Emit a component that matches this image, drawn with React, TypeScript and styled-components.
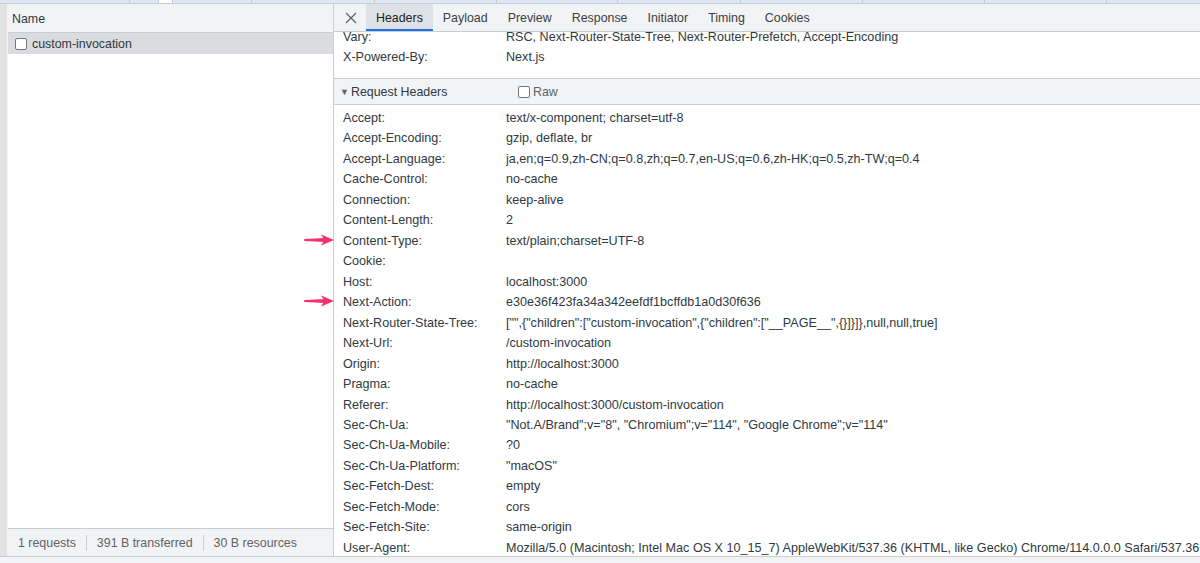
import React from "react";
import styled, { createGlobalStyle } from "styled-components";

const Global = createGlobalStyle`
  html, body { margin: 0; padding: 0; background: #ffffff; }
  body { font-family: "Liberation Sans", Arial, Helvetica, sans-serif; font-size: 12.4px; color: #303942; }
  * { box-sizing: border-box; }
`;

const Page = styled.div`
  position: relative;
  width: 1200px;
  height: 563px;
  overflow: hidden;
  display: grid;
  grid-template-rows: 4px 552px 7px;
`;

const TopStrip = styled.div`
  background: #dfe8f6;
  border-bottom: 1px solid #c8cbd0;
  display: flex;
`;

const TopCell = styled.div<{ $w: number; $white?: boolean }>`
  width: ${(p) => p.$w}px;
  flex: none;
  height: 100%;
  background: ${(p) => (p.$white ? "#ffffff" : "transparent")};
  border-right: 1px solid #c6ccd6;
`;

const Main = styled.div`
  display: flex;
  min-height: 0;
`;

const Gutter = styled.div`
  width: 8px;
  flex: none;
  background: #e2e2e2;
  border-right: 1px solid #f4f4f4;
`;

const LeftPanel = styled.div`
  width: 326px;
  flex: none;
  display: flex;
  flex-direction: column;
  border-right: 1px solid #cbcdd1;
  background: #ffffff;
`;

const NameHeader = styled.div`
  height: 29px;
  flex: none;
  background: #f1f3f4;
  border-bottom: 1px solid #cbcdd1;
  display: flex;
  align-items: center;
  padding-left: 4px;
  padding-top: 1px;
  color: #303942;
`;

const RequestRow = styled.div`
  height: 21px;
  flex: none;
  background: #dadce0;
  display: flex;
  align-items: center;
  padding-left: 7px;
  gap: 5px;
  color: #303942;
`;

const Box = styled.span`
  width: 12px;
  height: 12px;
  flex: none;
  border: 1px solid #767676;
  border-radius: 2px;
  background: #ffffff;
  display: inline-block;
`;

const Spacer = styled.div`
  flex: 1;
`;

const Footer = styled.div`
  height: 28px;
  flex: none;
  background: #f1f3f4;
  border-top: 1px solid #cbcdd1;
  display: flex;
  align-items: center;
  color: #5f6368;
`;

const FooterItem = styled.span<{ $last?: boolean }>`
  padding: 0 10px;
  line-height: 16px;
  border-right: ${(p) => (p.$last ? "none" : "1px solid #cbcdd1")};
  white-space: nowrap;
`;

const RightPanel = styled.div`
  flex: 1;
  min-width: 0;
  display: flex;
  flex-direction: column;
  background: #ffffff;
`;

const TabBar = styled.div`
  height: 28px;
  flex: none;
  background: #f1f3f4;
  border-bottom: 1px solid #cbcdd1;
  display: flex;
  align-items: stretch;
  padding-left: 32px;
  position: relative;
`;

const CloseBtn = styled.div`
  position: absolute;
  left: 10px;
  top: 7px;
  width: 14px;
  height: 14px;
  display: flex;
  align-items: center;
  justify-content: center;
`;

const Tab = styled.div<{ $active?: boolean }>`
  padding: 0 10px;
  display: flex;
  align-items: center;
  color: ${(p) => (p.$active ? "#202124" : "#3c4043")};
  background: ${(p) => (p.$active ? "#dee1e6" : "transparent")};
  border-bottom: 2px solid ${(p) => (p.$active ? "#1a73e8" : "transparent")};
  padding-top: 2px;
  white-space: nowrap;
`;

const Content = styled.div`
  flex: 1;
  min-height: 0;
  overflow: hidden;
  font-size: 12.6px;
`;

const Scrolled = styled.div`
  margin-top: -5px;
`;

const Section = styled.div<{ $padTop?: number; $padBottom?: number }>`
  padding-top: ${(p) => p.$padTop ?? 0}px;
  padding-bottom: ${(p) => p.$padBottom ?? 0}px;
`;

const Row = styled.div`
  display: grid;
  grid-template-columns: 163px 1fr;
  height: 20.48px;
  line-height: 20.48px;
  padding-left: 9px;
  white-space: nowrap;
`;

const HName = styled.span`
  color: #303942;
  overflow: hidden;
`;

const HValue = styled.span`
  color: #303942;
  overflow: hidden;
`;

const SectionHeader = styled.div`
  height: 27px;
  background: #f1f3f4;
  border-top: 1px solid #cbcdd1;
  border-bottom: 1px solid #cbcdd1;
  display: grid;
  grid-template-columns: 178px 1fr;
  align-items: center;
  padding-left: 6px;
  padding-top: 1px;
  color: #303942;
  font-size: 12.4px;
`;

const SectionTitle = styled.span`
  display: flex;
  align-items: center;
  gap: 2px;
`;

const Triangle = styled.span`
  font-size: 9px;
  color: #5f6368;
  width: 9px;
`;

const RawLabel = styled.label`
  display: flex;
  align-items: center;
  gap: 3px;
  color: #5f6368;
`;

const BottomStrip = styled.div`
  background: #f1f3f4;
  border-top: 1px solid #cbcdd1;
`;

const Arrow = styled.svg<{ $top: number }>`
  position: absolute;
  left: 304px;
  top: ${(p) => p.$top}px;
  width: 31px;
  height: 12px;
  overflow: visible;
`;

const responseRows: [string, string][] = [
  ["Vary:", "RSC, Next-Router-State-Tree, Next-Router-Prefetch, Accept-Encoding"],
  ["X-Powered-By:", "Next.js"],
];

const requestRows: [string, string][] = [
  ["Accept:", "text/x-component; charset=utf-8"],
  ["Accept-Encoding:", "gzip, deflate, br"],
  ["Accept-Language:", "ja,en;q=0.9,zh-CN;q=0.8,zh;q=0.7,en-US;q=0.6,zh-HK;q=0.5,zh-TW;q=0.4"],
  ["Cache-Control:", "no-cache"],
  ["Connection:", "keep-alive"],
  ["Content-Length:", "2"],
  ["Content-Type:", "text/plain;charset=UTF-8"],
  ["Cookie:", ""],
  ["Host:", "localhost:3000"],
  ["Next-Action:", "e30e36f423fa34a342eefdf1bcffdb1a0d30f636"],
  ["Next-Router-State-Tree:", '["",{"children":["custom-invocation",{"children":["__PAGE__",{}]}]},null,null,true]'],
  ["Next-Url:", "/custom-invocation"],
  ["Origin:", "http://localhost:3000"],
  ["Pragma:", "no-cache"],
  ["Referer:", "http://localhost:3000/custom-invocation"],
  ["Sec-Ch-Ua:", '"Not.A/Brand";v="8", "Chromium";v="114", "Google Chrome";v="114"'],
  ["Sec-Ch-Ua-Mobile:", "?0"],
  ["Sec-Ch-Ua-Platform:", '"macOS"'],
  ["Sec-Fetch-Dest:", "empty"],
  ["Sec-Fetch-Mode:", "cors"],
  ["Sec-Fetch-Site:", "same-origin"],
  ["User-Agent:", "Mozilla/5.0 (Macintosh; Intel Mac OS X 10_15_7) AppleWebKit/537.36 (KHTML, like Gecko) Chrome/114.0.0.0 Safari/537.36"],
];

const tabs = ["Headers", "Payload", "Preview", "Response", "Initiator", "Timing", "Cookies"];
const topCells = [130, 29, 14, 79, 123, 122, 121, 123, 122, 122, 122, 100];

const PinkArrow = ({ top }: { top: number }) => (
  <Arrow $top={top} viewBox="0 0 31 12">
    <path d="M1 6 L21 5 L21 7 Z" fill="#f2306e" stroke="#f2306e" strokeWidth="2" strokeLinejoin="round" />
    <path d="M17 0.5 L30 6 L17 11.5 L20.5 6 Z" fill="#f2306e" />
  </Arrow>
);

export default function App() {
  return (
    <>
      <Global />
      <Page>
        <TopStrip>
          {topCells.map((w, i) => (
            <TopCell key={i} $w={w} $white={i === 2} />
          ))}
        </TopStrip>
        <Main>
          <Gutter />
          <LeftPanel>
            <NameHeader>Name</NameHeader>
            <RequestRow>
              <Box />
              <span>custom-invocation</span>
            </RequestRow>
            <Spacer />
            <Footer>
              <FooterItem>1 requests</FooterItem>
              <FooterItem>391 B transferred</FooterItem>
              <FooterItem $last>30 B resources</FooterItem>
            </Footer>
          </LeftPanel>
          <RightPanel>
            <TabBar>
              <CloseBtn>
                <svg width="12" height="12" viewBox="0 0 12 12">
                  <path d="M1 1 L11 11 M11 1 L1 11" stroke="#5f6368" strokeWidth="1.3" />
                </svg>
              </CloseBtn>
              {tabs.map((t, i) => (
                <Tab key={t} $active={i === 0}>
                  {t}
                </Tab>
              ))}
            </TabBar>
            <Content>
              <Scrolled>
                <Section $padBottom={10}>
                  {responseRows.map(([k, v]) => (
                    <Row key={k}>
                      <HName>{k}</HName>
                      <HValue>{v}</HValue>
                    </Row>
                  ))}
                </Section>
                <SectionHeader>
                  <SectionTitle>
                    <Triangle>▼</Triangle>
                    Request Headers
                  </SectionTitle>
                  <RawLabel>
                    <Box />
                    Raw
                  </RawLabel>
                </SectionHeader>
                <Section $padTop={3}>
                  {requestRows.map(([k, v]) => (
                    <Row key={k}>
                      <HName>{k}</HName>
                      <HValue>{v}</HValue>
                    </Row>
                  ))}
                </Section>
              </Scrolled>
            </Content>
          </RightPanel>
        </Main>
        <BottomStrip />
        <PinkArrow top={234} />
        <PinkArrow top={295} />
      </Page>
    </>
  );
}
